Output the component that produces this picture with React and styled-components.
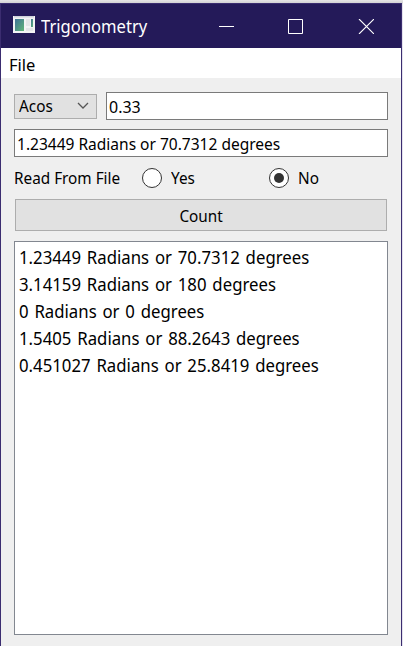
import React from "react";
import styled, { createGlobalStyle } from "styled-components";

const GlobalStyle = createGlobalStyle`
  * { box-sizing: border-box; }
  body { margin: 0; overflow: hidden; background: #e9e9ec; }
`;

const Screen = styled.div`
  width: 403px;
  height: 646px;
  padding: 3px 1px 0 0;
  background: linear-gradient(#e6e6e6, #d2d2d4 3px, #e4e2ee 4px);
  font-family: "Noto Sans", "Open Sans", sans-serif;
  color: #000;
`;

const Window = styled.main`
  width: 402px;
  height: 643px;
  border: 1px solid #3b2d70;
  border-bottom: 0;
  background: #efefef;
  display: flex;
  flex-direction: column;
`;

const TitleBar = styled.header`
  height: 44px;
  flex: none;
  display: flex;
  align-items: center;
  padding: 0 0 0 12px;
  background: #241a59;
  color: #fff;
`;

const IconFrame = styled.svg`
  flex: none;
  margin-bottom: 3px;
`;

const Caption = styled.div`
  width: 179px;
  padding: 2px 0 0 6px;
`;

const WindowButtons = styled.div`
  display: flex;
  gap: 54px;
  margin: 1px 0 0 5px;
`;

const MenuBar = styled.nav`
  height: 30px;
  flex: none;
  background: #fff;
  padding: 3px 8px 0;
  display: flex;
  align-items: center;
`;

const Content = styled.section`
  flex: 1;
  display: flex;
  flex-direction: column;
  padding: 14px 13px 11px;
`;

const Label = styled.span`
  display: inline-block;
  white-space: pre;
  font-size: ${(p) => p.$size || 16.3}px;
  line-height: 24px;
  word-spacing: ${(p) => p.$gap || 0}px;
  transform: scaleX(${(p) => p.$stretch || 0.94});
  transform-origin: ${(p) => p.$origin || "left"} center;
`;

const InputRow = styled.div`
  display: flex;
  align-items: center;
  gap: 9px;
`;

const Combo = styled.div`
  width: 83px;
  height: 25px;
  border: 1px solid #adadad;
  background: #e1e1e1;
  display: flex;
  align-items: center;
  justify-content: space-between;
  padding: 0 7px 0 4px;
`;

const Field = styled.div`
  flex: ${(p) => (p.$grow ? 1 : "none")};
  height: 28px;
  border: 1px solid #7a7a7a;
  background: #fff;
  display: flex;
  align-items: center;
  padding: 1px 0 0 2px;
`;

const ResultField = styled(Field)`
  margin-top: 9px;
`;

const RadioRow = styled.div`
  height: 42px;
  display: grid;
  grid-template-columns: 128px 127px 1fr;
  align-items: center;
  padding-bottom: 1px;
`;

const Option = styled.div`
  display: flex;
  align-items: center;
  gap: 9px;
`;

const Circle = styled.span`
  width: 20px;
  height: 20px;
  border: 1px solid #333;
  border-radius: 50%;
  background: #fff;
  display: grid;
  place-items: center;
`;

const Dot = styled.span`
  width: 10px;
  height: 10px;
  border-radius: 50%;
  background: #333;
`;

const CountButton = styled.div`
  height: 32px;
  margin: 0 1px;
  border: 1px solid #adadad;
  background: #e1e1e1;
  display: flex;
  align-items: center;
  justify-content: center;
  padding-top: 2px;
`;

const List = styled.ul`
  flex: 1;
  list-style: none;
  margin: 10px 0 0;
  padding: 2px 0 0 4px;
  border: 1px solid #828790;
  background: #fff;
`;

const Item = styled.li`
  height: 27px;
  display: flex;
  align-items: center;
`;

const results = [
  "1.23449 Radians or 70.7312 degrees",
  "3.14159 Radians or 180 degrees",
  "0 Radians or 0 degrees",
  "1.5405 Radians or 88.2643 degrees",
  "0.451027 Radians or 25.8419 degrees",
];

function AppIcon() {
  return (
    <IconFrame width="22" height="17" viewBox="0 0 22 17">
      <defs>
        <linearGradient id="pane" x1="0" y1="0" x2="1" y2="1">
          <stop offset="0" stopColor="#3f7298" />
          <stop offset="1" stopColor="#61b678" />
        </linearGradient>
      </defs>
      <path fill="#f3f4f5" d="M0 0h22v17H0z" />
      <path fill="#cfd3db" d="M1 0h20v1.5H1z" />
      <path fill="url(#pane)" d="M2 3h9v12H2z" />
      <path fill="#e4e6e8" d="M13 3h4v7h-4zM13 12h7v3h-7z" />
      <path fill="url(#pane)" d="M18 3h2v8h-2z" />
    </IconFrame>
  );
}

function Radio({ label, checked }) {
  return (
    <Option role="radio" aria-checked={checked}>
      <Circle>{checked && <Dot />}</Circle>
      <Label>{label}</Label>
    </Option>
  );
}

export default function App() {
  return (
    <Screen>
      <GlobalStyle />
      <Window>
        <TitleBar>
          <AppIcon />
          <Caption><Label $size={17.3} $stretch={0.96}>Trigonometry</Label></Caption>
          <WindowButtons>
            <svg width="15" height="15"><path d="M0 7.5h15" stroke="#fff" /></svg>
            <svg width="15" height="15"><path d="M.5.5h14v14H.5z" fill="none" stroke="#fff" /></svg>
            <svg width="17" height="15"><path d="M2 0l15 15M17 0L2 15" stroke="#fff" strokeWidth="1.1" /></svg>
          </WindowButtons>
        </TitleBar>
        <MenuBar><Label $size={17} $stretch={0.97}>File</Label></MenuBar>
        <Content>
          <InputRow>
            <Combo>
              <Label>Acos</Label>
              <svg width="12" height="8"><path d="M1 1l5 5 5-5" fill="none" stroke="#555" strokeWidth="1.3" /></svg>
            </Combo>
            <Field $grow><Label $stretch={0.98}>0.33</Label></Field>
          </InputRow>
          <ResultField><Label $stretch={0.953}>{results[0]}</Label></ResultField>
          <RadioRow>
            <Label>Read From File</Label>
            <Radio label="Yes" checked={false} />
            <Radio label="No" checked />
          </RadioRow>
          <CountButton><Label $origin="center">Count</Label></CountButton>
          <List>
            {results.map((text) => (
              <Item key={text}><Label $size={17.3} $stretch={0.97} $gap={1.5}>{text}</Label></Item>
            ))}
          </List>
        </Content>
      </Window>
    </Screen>
  );
}
